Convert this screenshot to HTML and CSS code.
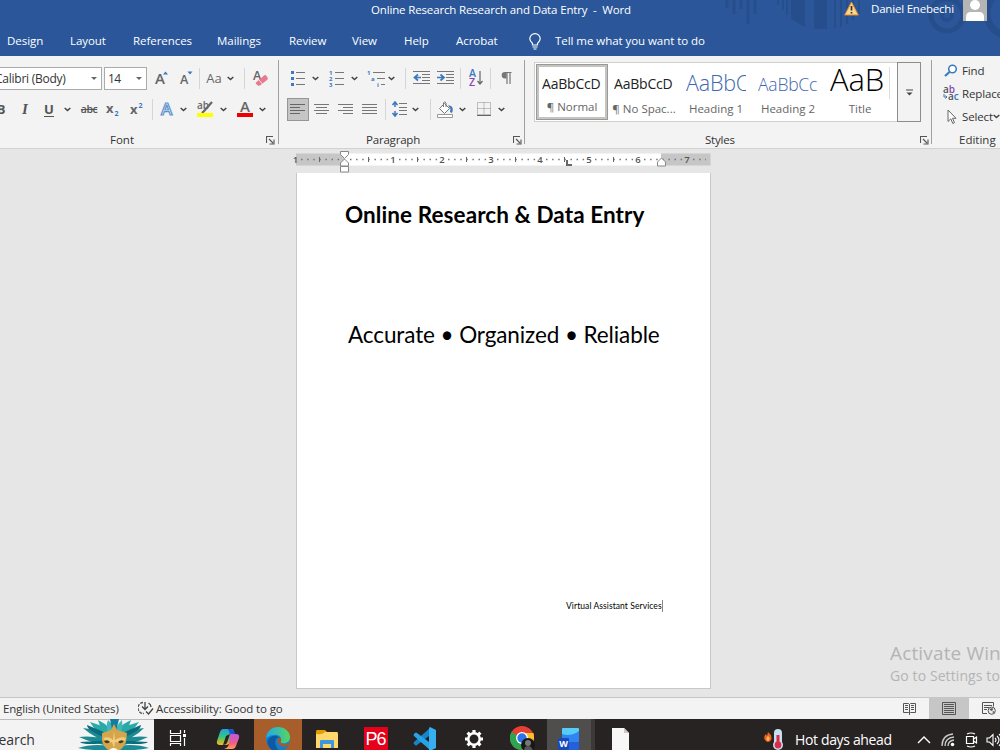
FILE: index.html
```html
<!DOCTYPE html>
<html lang="en">
<head>
    <meta charset="UTF-8">
    <meta name="viewport" content="width=device-width, initial-scale=1.0">
    <title>Online Research Research and Data Entry - Word</title>
    <link rel="stylesheet" href="styles.css">
</head>
<body>
    <!-- Shared shapes -->
    <svg class="defs" width="0" height="0">
        <symbol id="chev" viewBox="0 0 7 5"><path d="M.7 1l2.8 2.6L6.300 1" fill="none" stroke="#444" stroke-width="1.5"/></symbol>
        <symbol id="launch" viewBox="0 0 9 9"><path d="M.5 7V.5H7M3 3l4 4M8 3.500V8H3.500" fill="none" stroke="#555" stroke-width="1.100"/></symbol>
    </svg>

    <header class="titlebar">
        <svg class="pattern" width="300" height="56" viewBox="700 0 300 56">
            <g stroke="#264e8c" fill="none">
                <path d="M727 0v8M734 0v14M741 0v9M748 0v24M755 0v14" stroke-width="3"/>
                <path d="M778 0v5M783 0v10M787 0v15" stroke-width="2"/>
                <path d="M835 0v28M841 0v27M847 0v24M853 0v20M859 0v14" stroke-width="2"/>
                <circle cx="947" cy="15" r="16" stroke-width="5"/>
                <circle cx="947" cy="15" r="5" stroke-width="4"/>
                <circle cx="1010" cy="13" r="23" stroke-width="7"/>
            </g>
            <path d="M791 0h14v27l-14-8zM814 0h13v29h-13z" fill="#264e8c"/>
        </svg>
        <div class="title-row">
            <span class="doc-name">Online Research Research and Data Entry&nbsp; -&nbsp; Word</span>
            <svg class="warn" width="15" height="15" viewBox="0 0 15 15"><path d="M7.500 1L14.300 14H.7z" fill="#fcd68a" stroke="#e08a2c"/><path d="M7.500 5v4.500M7.500 11v1.600" stroke="#333" stroke-width="1.700"/></svg>
            <span class="user">Daniel Enebechi</span>
            <svg class="avatar" width="24" height="21" viewBox="0 0 24 21"><path d="M0 0h24v21H0z" fill="#b5b5b5"/><circle cx="12" cy="5" r="5" fill="#fff"/><path d="M3 21v-4q0-5 5-5h8q5 0 5 5v4z" fill="#fff"/></svg>
        </div>
        <nav class="tabs">
            <a>Design</a><a>Layout</a><a>References</a><a>Mailings</a><a>Review</a><a>View</a><a>Help</a><a>Acrobat</a>
            <svg width="12" height="17" viewBox="0 0 12 17"><path d="M3.500 12V10.500C2 9 .8 7.800.8 5.800a5.200 5.200 0 0 1 10.400 0c0 2-1.200 3.200-2.700 4.700V12zM3.500 14h5M4.500 16h3" fill="none" stroke="#fff" stroke-width="1.200"/></svg>
            <a class="tell">Tell me what you want to do</a>
        </nav>
    </header>

    <section class="ribbon">
        <div class="group font-group">
            <div class="row font-row-1">
                <div class="combo face"><span>Calibri (Body)</span><i class="arrow"></i></div>
                <div class="combo size"><span>14</span><i class="arrow"></i></div>
                <svg width="14" height="16" viewBox="0 0 14 16"><text x="1" y="14" class="g15">A</text><path d="M9 4.500l2.500-3 2.500 3z" fill="#3b78bd"/></svg>
                <svg width="14" height="16" viewBox="0 0 14 16"><text x="2" y="14" class="g12">A</text><path d="M9.500 1.500l2.500 3 2.500-3z" fill="#3b78bd"/></svg>
                <i class="sep"></i>
                <span class="case">Aa</span>
                <svg class="chev" width="7" height="5"><use href="#chev"/></svg>
                <i class="sep"></i>
                <svg width="16" height="17" viewBox="0 0 16 17"><text x="0" y="10" class="g12">A</text><path d="M3.500 12L11 5.500q1.500-1 2.500.5l1 1.500q1 1.500-.5 2.500l-7 5.500-2 .3-2.500-2.500z" fill="#e8798e"/><path d="M6 10l3.500 4" stroke="#f8dfe4"/></svg>
            </div>
            <div class="row font-row-2">
                <b class="letter">B</b>
                <i class="letter italic">I</i>
                <b class="letter under">U</b>
                <svg class="chev" width="7" height="5"><use href="#chev"/></svg>
                <span class="strike">abc</span>
                <svg width="14" height="16" viewBox="0 0 14 16"><text x="0" y="11.500" class="x">x</text><text x="8.500" y="15" class="n">2</text></svg>
                <svg width="14" height="16" viewBox="0 0 14 16"><text x="0" y="12.500" class="x">x</text><text x="8.500" y="7" class="n">2</text></svg>
                <i class="sep"></i>
                <svg width="15" height="16" viewBox="0 0 15 16"><text x="2" y="14" class="effect">A</text></svg>
                <svg class="chev" width="7" height="5"><use href="#chev"/></svg>
                <svg width="18" height="18" viewBox="0 0 18 18"><text x="1" y="9" class="hl">ab</text><path d="M16 2L9 10l-3 3" fill="none" stroke="#666" stroke-width="2.200"/><path d="M1 13h16v4H1z" fill="#ff0"/></svg>
                <svg class="chev" width="7" height="5"><use href="#chev"/></svg>
                <svg width="16" height="18" viewBox="0 0 16 18"><text x="3" y="12" class="g15">A</text><path d="M0 13h16v4H0z" fill="#e00"/></svg>
                <svg class="chev" width="7" height="5"><use href="#chev"/></svg>
            </div>
            <div class="caption"><span>Font</span><svg width="9" height="9"><use href="#launch"/></svg></div>
        </div>

        <div class="group para-group">
            <div class="row para-row-1">
                <svg width="15" height="16" viewBox="0 0 15 16"><path d="M1 1h3v3H1zM1 7h3v3H1zM1 13h3v3H1z" fill="#3b78bd"/><path d="M6 2.500h9M6 8.500h9M6 14.500h9" stroke="#777"/></svg>
                <svg class="chev" width="7" height="5"><use href="#chev"/></svg>
                <svg width="15" height="17" viewBox="0 0 15 17"><g class="num"><text x="0" y="5">1</text><text x="0" y="11">2</text><text x="0" y="17">3</text></g><path d="M6 2.500h9M6 8.500h9M6 14.500h9" stroke="#777"/></svg>
                <svg class="chev" width="7" height="5"><use href="#chev"/></svg>
                <svg class="multi" width="18" height="17" viewBox="0 0 18 17"><g class="num"><text x="-1" y="5">1</text><text x="3" y="11">a</text><text x="9" y="17">i</text></g><path d="M5 2.500h12M9 8.500h8M13 14.500h4" stroke="#777"/></svg>
                <svg class="chev" width="7" height="5"><use href="#chev"/></svg>
                <i class="sep"></i>
                <svg width="17" height="14" viewBox="0 0 17 14"><path d="M0 .5h17M9 3.500h8M9 6.500h8M9 9.500h8M0 12.500h17" stroke="#777"/><path d="M8 6.500H2M5 3.500l-3.500 3 3.500 3" fill="none" stroke="#3b78bd" stroke-width="1.700"/></svg>
                <svg width="17" height="14" viewBox="0 0 17 14"><path d="M0 .5h17M9 3.500h8M9 6.500h8M9 9.500h8M0 12.500h17" stroke="#777"/><path d="M0 6.500h6M3.500 3.500l3.500 3-3.500 3" fill="none" stroke="#3b78bd" stroke-width="1.700"/></svg>
                <i class="sep"></i>
                <svg width="14" height="18" viewBox="0 0 14 18"><text x="0" y="8" class="az">A</text><text x="0" y="17" class="az z">Z</text><path d="M11 2v13M8.500 12l2.500 3 2.500-3" fill="none" stroke="#666" stroke-width="1.200"/></svg>
                <i class="sep"></i>
                <svg width="11" height="14" viewBox="0 0 11 14"><path d="M5.500 1H4a3.300 3.300 0 0 0 0 6.600h1.500z" fill="#777"/><path d="M4 1.500h6.500M6 1v12M9 1v12" fill="none" stroke="#777" stroke-width="1.200"/></svg>
            </div>
            <div class="row para-row-2">
                <div class="pressed"><svg width="15" height="11" viewBox="0 0 15 11"><path d="M0 .5h15M0 3.500h10M0 6.500h15M0 9.500h10" stroke="#666"/></svg></div>
                <svg width="15" height="11" viewBox="0 0 15 11"><path d="M0 .5h15M2 3.500h11M0 6.500h15M2 9.500h11" stroke="#777"/></svg>
                <svg width="15" height="11" viewBox="0 0 15 11"><path d="M0 .5h15M5 3.500h10M0 6.500h15M5 9.500h10" stroke="#777"/></svg>
                <svg width="15" height="11" viewBox="0 0 15 11"><path d="M0 .5h15M0 3.500h15M0 6.500h15M0 9.500h15" stroke="#777"/></svg>
                <i class="sep"></i>
                <svg width="15" height="16" viewBox="0 0 15 16"><path d="M3 1v5M3 10v5M.5 4L3 1l2.500 3M.5 12L3 15l2.500-3" fill="none" stroke="#3b78bd" stroke-width="1.500"/><path d="M7 2.500h8M7 6.500h8M7 9.500h8M7 13.500h8" stroke="#777"/></svg>
                <svg class="chev" width="7" height="5"><use href="#chev"/></svg>
                <i class="sep"></i>
                <svg width="17" height="17" viewBox="0 0 17 17"><path d="M2.500 7.500l5-5 5 5-5 5zM6.500 6V2q1-2.500 2.500 0v4" fill="#fff" stroke="#777"/><path d="M11 4l3 1q3 2 1 7l-2-1 .5-3z" fill="#3b78bd"/><path d="M.5 13.500h15v3H.5z" fill="#fff" stroke="#999"/></svg>
                <svg class="chev" width="7" height="5"><use href="#chev"/></svg>
                <svg width="15" height="15" viewBox="0 0 15 15"><path d="M.5.500h13v12H.5zM7 .5v12M.5 6.500h13" fill="none" stroke="#888" stroke-dasharray="1 1"/><path d="M0 13.500h14" stroke="#666"/></svg>
                <svg class="chev" width="7" height="5"><use href="#chev"/></svg>
            </div>
            <div class="caption"><span>Paragraph</span><svg width="9" height="9"><use href="#launch"/></svg></div>
        </div>

        <div class="group style-group">
            <div class="gallery">
                <div class="style selected"><span class="sample">AaBbCcD</span><span class="name">¶ Normal</span></div>
                <div class="style"><span class="sample">AaBbCcD</span><span class="name">¶ No Spac...</span></div>
                <div class="style h1"><span class="sample">AaBbC</span><span class="name">Heading 1</span></div>
                <div class="style h2"><span class="sample">AaBbCc</span><span class="name">Heading 2</span></div>
                <div class="style big"><span class="sample">AaB</span><span class="name">Title</span></div>
                <div class="more"><svg width="7" height="7" viewBox="0 0 7 7"><path d="M0 1h7" stroke="#444"/><path d="M.5 3.500h6l-3 3z" fill="#444"/></svg></div>
            </div>
            <div class="caption"><span>Styles</span><svg width="9" height="9"><use href="#launch"/></svg></div>
        </div>

        <div class="group edit-group">
            <div class="edit"><svg width="15" height="14" viewBox="0 0 15 14"><circle cx="9" cy="5" r="3.800" fill="#fff" stroke="#3b78bd" stroke-width="1.500"/><path d="M6 8l-4.500 4" stroke="#3b78bd" stroke-width="2.200"/></svg><span>Find</span></div>
            <div class="edit"><svg width="16" height="17" viewBox="0 0 16 17"><g class="swap"><text x="0" y="7.500">a<tspan fill="#8a43b5">b</tspan></text><text x="5" y="15">a<tspan fill="#3b78bd">c</tspan></text></g><path d="M1 9v3h3M2.500 10.500L4 12l-1.500 1.500" fill="none" stroke="#3b78bd"/></svg><span>Replace</span></div>
            <div class="edit"><svg width="15" height="16" viewBox="0 0 15 16"><path d="M4.500 1v11.500l2.800-2.700 2 4.700 1.700-.8-2-4.400h3.500z" fill="#fff" stroke="#666"/></svg><span>Select</span><svg class="chev" width="7" height="5"><use href="#chev"/></svg></div>
            <div class="caption"><span>Editing</span></div>
        </div>
    </section>

    <main class="workspace">
        <svg class="ruler" width="420" height="24" viewBox="292 149 420 24">
            <path d="M296 153.500h48v12h-48zM661 153.500h49.500v12H661z" fill="#c6c6c6"/>
            <path d="M344 153.500h317v12H344z" fill="#fff"/>
            <path d="M301 159.500H342M350 159.500H391" class="dots"/>
            <path d="M399 159.500H440M448 159.500H489M497 159.500H538M546 159.500H587M595 159.500H636M644 159.500H685M693 159.500H706" class="dots"/>
            <path d="M319.500 157v5M368.500 157v5M417.500 157v5M466.500 157v5M515.500 157v5M564.500 157v5M613.500 157v5" stroke="#666"/>
            <g class="marks"><text x="295.500" y="163">1</text><text x="393" y="163">1</text><text x="442" y="163">2</text><text x="491" y="163">3</text><text x="540" y="163">4</text><text x="589" y="163">5</text><text x="638" y="163">6</text><text x="687" y="163">7</text></g>
            <path d="M340.500 151.500h8v3l-4 4-4-4zM344.500 159l4 4v3h-8v-3zM340.500 166.500h8v5.500h-8zM661.500 158l4 4v4h-8v-4z" fill="#fff" stroke="#888"/>
            <path d="M567 160v5h5" fill="none" stroke="#666" stroke-width="2"/>
        </svg>
        <article class="page">
            <h1>Online Research &amp; Data Entry</h1>
            <p class="tagline">Accurate • Organized • Reliable</p>
            <p class="services"><span>Virtual Assistant Services</span></p>
        </article>
        <div class="watermark">
            <p class="activate">Activate Windows</p>
            <p class="settings">Go to Settings to activate Windows.</p>
        </div>
    </main>

    <footer class="statusbar">
        <span class="lang">English (United States)</span>
        <svg class="access" width="16" height="15" viewBox="0 0 16 15"><path d="M5 1.500A5.500 5.500 0 0 0 6 12.500" fill="none" stroke="#555" stroke-width="1.300" stroke-dasharray="3 1"/><path d="M7 1v7M4 5.500l3 3 3-3M10.500 2q2.500 1.500 2.500 4M8 10.500l2.500 2.500L15 7.500" fill="none" stroke="#444" stroke-width="1.300"/></svg>
        <span class="good">Accessibility: Good to go</span>
        <div class="views">
            <div><svg width="13" height="13" viewBox="0 0 13 13"><path d="M.5 1.500h5l1 1 1-1h5v9h-5l-1 1-1-1h-5zM6.500 2v11M2 3.500h3M2 5.500h3M2 7.500h3M8 3.500h3M8 5.500h3M8 7.500h3" fill="none" stroke="#555"/></svg></div>
            <div class="active"><svg width="14" height="13" viewBox="0 0 14 13"><path d="M.5.500h13v12H.5zM2 2.500h10M2 4.500h10M2 6.500h10M2 8.500h10M2 10.500h10" fill="none" stroke="#555"/></svg></div>
            <div><svg width="14" height="13" viewBox="0 0 14 13"><path d="M5 11.500H.5V.5h11v4M2 3.500h8M2 5.500h5M2 7.500h3" fill="none" stroke="#555"/><circle cx="9.700" cy="8.700" r="3.600" fill="#eee" stroke="#555"/><path d="M7.500 7l3-1 .5 2-2 1zM10 10l2-1v2z" fill="#555"/></svg></div>
        </div>
    </footer>

    <div class="taskbar">
        <div class="search"><span>Search</span>
            <svg width="72" height="31" viewBox="78 719 72 31">
                <g fill="#1c8c94">
                    <path d="M111 750Q92 751 78 748q14-5 33-2zM112 746Q94 744 79 737q19-2 36 6zM113 744Q94 738 83 728q17 1 32 13z"/>
                    <path d="M117 750q19 1 32-2-13-5-32-2zM116 746q18-2 32-9-19-2-35 6zM115 744q20-6 29-16-18 1-32 13z"/>
                </g>
                <g fill="#2aa9a9"><path d="M113 742Q95 732 90 722q17 4 26 18zM114 741Q100 730 98 720q13 6 19 20zM115 742Q133 732 139 722q-18 4-26 18zM114 741Q129 730 131 720q-14 6-18 20z"/></g>
                <g fill="#0d6c7b"><path d="M114 742Q84 746 80 742q18-1 34-2zM115 741Q87 732 87 725q14 5 28 13zM113 742q30 4 35 0-18-1-35-2zM113 741q28-9 28-16-14 5-27 13z"/></g>
                <path d="M112 740q-8-12-4-20 7 5 6 20zM114 740q1-15 8-20 2 10-6 20z" fill="#42b7b9"/><path d="M114 740l-4-21h9z" fill="#147c9d"/>
                <path d="M102 733q6-2 9-3l3-6 3 6q4 1 10 3l-1 9q-3 7-8 9h-8q-6-3-8-10z" fill="#d5a54b"/>
                <path d="M103 738q7-2 10 2l1-9 1 9q5-4 11-2-1 4-5 5l-6-1-1 6-2-6-5 1z" fill="#f1ce7d"/>
                <path d="M104 741q4-2 6 1-4 3-6-1zM118 742q3-3 6-1-3 4-6 1z" fill="#493822"/><path d="M109 750q5-4 9 0z" fill="#fff"/>
            </svg>
        </div>
        <div class="apps">
            <div><svg width="18" height="17" viewBox="0 0 18 17"><path d="M1.500 0v3.500h10V0M1.500 16v-2.500h10V16M1.500 5.500h10v6h-10zM15.500 0v3M15.500 8v8" fill="none" stroke="#fff" stroke-width="1.200"/><path d="M14 4h3v3h-3z" fill="#fff"/></svg></div>
            <div><svg width="24" height="22" viewBox="0 0 24 22">
                <defs><linearGradient id="cpA" x2="0" y2="1"><stop stop-color="#23a0e8"/><stop offset=".5" stop-color="#37c779"/><stop offset="1" stop-color="#ffb515"/></linearGradient><linearGradient id="cpB" x2="0" y2="1"><stop stop-color="#b85be6"/><stop offset=".6" stop-color="#f35a86"/><stop offset="1" stop-color="#ff9d55"/></linearGradient></defs>
                <path d="M7 1h9q2 0 1 3l-3 10q-1 3-4 3H4q-4 0-3-4L4 4q1-3 3-3z" fill="url(#cpA)"/><path d="M14 6h6q4 0 3 4l-3 8q-1 3-4 3H8q4-1 5-5z" fill="url(#cpB)"/><path d="M12 1h4q2 0 3 5h-5z" fill="#1c56c6"/><path d="M10 8l4-2-3 9q-1 2-4 2z" fill="#272323"/></svg></div>
            <div class="edge"><svg width="26" height="26" viewBox="0 0 26 26">
                <defs><linearGradient id="eg"><stop stop-color="#24a8e8"/><stop offset="1" stop-color="#54d65f"/></linearGradient></defs>
                <circle cx="13" cy="13" r="12" fill="#1584d4"/><path d="M1 12C2 4 8 1 13 1c7 0 12 5 12 10 0 5-4 7-8 6-3-.5-2-2-1-3 1-6-9-7-15-2z" fill="url(#eg)"/><path d="M11 13q-3 8 6 10-8 5-13-2Q-1 13 8 10q5-1 7 3-2-2-4 0z" fill="#0c59a4"/><path d="M12 14q-1 6 6 6l6-1q-3 6-9 6-6-3-3-11z" fill="#1a7ac7"/><path d="M13 12q4-1 3 3-1 2 2 3 4 1 6-2l-1 4q-5 2-8-1-4-3-2-7z" fill="#a45b29"/></svg></div>
            <div><svg width="22" height="20" viewBox="0 0 22 20"><path d="M0 3q0-2 1-2h8l2 2v5H0z" fill="#dea000"/><path d="M0 5q6 1 9-2h12q1 0 1 2v14H0z" fill="#ffd76a"/><path d="M4 19v-7q0-1 1-1h12q1 0 1 1v7h-3v-4H7v4z" fill="#3b98df"/></svg></div>
            <div><span class="p6">P6</span></div>
            <div><svg width="25" height="24" viewBox="0 0 25 24"><path d="M18 1L2 15q-1 1 0 2l1 1q1 1 2 0L21 6z" fill="#1685c8"/><path d="M18 23L2 9q-1-1 0-2l1-1q1-1 2 0l16 12z" fill="#27a2e6"/><path d="M18 0l6 3v18l-6 3-1-1V1z" fill="#37aef0"/></svg></div>
            <div><svg width="20" height="20" viewBox="0 0 20 20"><circle cx="10" cy="10" r="5.700" fill="none" stroke="#fff" stroke-width="2.500"/><path d="M10 1v3M10 16v3M1 10h3M16 10h3M3.600 3.600l2.200 2.200M14.200 14.200l2.200 2.200M16.400 3.600l-2.200 2.200M5.800 14.200l-2.200 2.200" stroke="#fff" stroke-width="3.200"/></svg></div>
            <div><svg width="25" height="25" viewBox="0 0 25 25"><circle cx="12" cy="12" r="12" fill="#e64034"/><path d="M12 12L1.500 6A12 12 0 0 0 12 24l5-9z" fill="#2da44f"/><path d="M12 7h11.500Q26 18 17 23l-5 1 5-9z" fill="#fbc226"/><circle cx="12" cy="12" r="6" fill="#fff"/><circle cx="12" cy="12" r="4.700" fill="#2c74e8"/><circle cx="18" cy="19" r="7" fill="#171717"/><circle cx="18" cy="17" r="3" fill="#777"/><path d="M14 25q0-5 4-5t5 5z" fill="#555"/></svg></div>
            <div class="current"><svg width="22" height="24" viewBox="0 0 22 24"><path d="M5 1h15q1 0 1 1v7H4V2q0-1 1-1z" fill="#54cdf8"/><path d="M4 7q9 3 17-3v12H4z" fill="#3184f3"/><path d="M4 15h17v8H4z" fill="#2461d8"/><rect y="11" width="11" height="12" rx="1" fill="#164bb8"/><text x="1.200" y="20" class="w">W</text></svg></div>
            <div><svg width="17" height="23" viewBox="0 0 17 23"><path d="M0 1h12l5 5v17H0z" fill="#f7f7f7"/><path d="M12 1v5h5z" fill="#c9c9c9"/></svg></div>
        </div>
        <div class="tray">
            <svg class="weather" width="20" height="22" viewBox="0 0 20 22"><path d="M4 4q5 4 3 8-3 4-6 0-2-3 1-6l1 2z" fill="#f26322"/><path d="M4 8q3 3 0 5-3-2 0-5z" fill="#ffc04e"/><rect x="10" y="1" width="8" height="17" rx="4" fill="#c6dff1"/><circle cx="14" cy="17" r="5" fill="#c6dff1"/><circle cx="14" cy="17" r="3.400" fill="#dc2b46"/><path d="M14 7v10" stroke="#dc2b46" stroke-width="3"/></svg>
            <span>Hot days ahead</span>
            <svg class="up" width="14" height="8" viewBox="0 0 14 8"><path d="M1 7l6-6 6 6" fill="none" stroke="#fff" stroke-width="1.400"/></svg>
            <svg class="wifi" width="14" height="14" viewBox="0 0 14 14"><path d="M1 13Q1 2 12 1M4 13Q4 5 13 4M7 13q0-5 6-6" fill="none" stroke="#ccc" stroke-width="1.300"/><circle cx="11.500" cy="11.500" r="1.800" fill="#fff"/></svg>
            <svg class="meet" width="13" height="16" viewBox="0 0 13 16"><path d="M1.500 4.500h7v7h-7zM8.500 7l3-2v6l-3-2M2 2q4-2 8 0M2 14q4 2 8 0" fill="none" stroke="#fff" stroke-width="1.200"/></svg>
            <svg class="sound" width="16" height="14" viewBox="0 0 16 14"><path d="M1 5h2.500L7 1.500v11L3.500 9H1zM9 5q2 2 0 4M11 3q4 4 0 8M13 1q5 6 0 12" fill="none" stroke="#fff" stroke-width="1.100"/></svg>
        </div>
    </div>
</body>
</html>
```
FILE: styles.css
```css
* {
    box-sizing: border-box;
}

body {
    margin: 0;
    width: 1000px;
    height: 750px;
    overflow: hidden;
    display: flex;
    flex-direction: column;
    background: #e6e6e6;
    color: #333;
    font-family: "Open Sans", "Noto Sans", sans-serif;
    font-size: 11.5px;
    white-space: nowrap;
}

svg {
    display: block;
    flex: none;
}

.defs {
    position: absolute;
}

p, h1 {
    margin: 0;
}

/* Title bar */
.titlebar {
    position: relative;
    height: 56px;
    flex: none;
    background: #2b579a;
    color: #fff;
}

.pattern {
    position: absolute;
    top: 0;
    right: 0;
}

.title-row {
    position: relative;
    display: flex;
    height: 21px;
    padding-left: 371px;
    line-height: 19px;
}

.doc-name {
    width: 473px;
    letter-spacing: -0.15px;
}

.warn {
    margin-top: 1px;
}

.user {
    width: 92px;
    margin-left: 12px;
    line-height: 18px;
    letter-spacing: -0.2px;
}

.tabs {
    position: relative;
    display: grid;
    grid-template-columns: 63px 63px 84px 72px 63px 52px 52px 73px 26px auto;
    align-items: center;
    height: 32px;
    margin-top: 4px;
    padding-left: 7px;
    line-height: 32px;
    letter-spacing: -0.05px;
}

/* Ribbon */
.ribbon {
    display: flex;
    flex: none;
    height: 93px;
    background: #f3f3f3;
    border-bottom: 1px solid #d2d2d2;
}

.ribbon svg {
    overflow: visible;
}

.group {
    position: relative;
    display: flex;
    flex-direction: column;
    flex: none;
    padding-top: 10px;
}

.group:not(:last-child)::after {
    content: "";
    position: absolute;
    right: 0;
    top: 4px;
    width: 1px;
    height: 84px;
    background: #a0a0a0;
}

.font-group { width: 279px; }
.para-group { width: 246px; padding-left: 6px; }
.style-group { width: 407px; padding: 6px 0 0 9px; }
.edit-group { width: 68px; padding: 3px 0 0 11px; overflow: hidden; }

.row {
    display: grid;
    align-items: center;
    justify-items: center;
    height: 24px;
    margin-bottom: 7px;
}

.font-row-1 { grid-template-columns: 104px 43px 28px 20px 9px 20px 16px 9px 23px; }
.font-row-2 { grid-template-columns: 24px 24px 24px 16px 24px 24px 24px 7px 21px 16px 24px 16px 23px 14px; margin-left: -11px; }
.para-row-1 { grid-template-columns: 24px 16px 23px 17px 20px 16px 8px 24px 24px 6px 26px 3px 28px; }
.para-row-2 { grid-template-columns: 24px 24px 24px 24px 9px 19px 16px 10px 21px 17px 22px 14px; }

.chev {
    justify-self: start;
    margin-left: 3px;
}

.multi {
    margin-left: 4px;
}

.sep {
    width: 1px;
    height: 21px;
    background: #d5d5d5;
}

.combo {
    display: flex;
    align-items: center;
    justify-content: space-between;
    height: 23px;
    padding-right: 4px;
    background: #fff;
    border: 1px solid #ababab;
    font-size: 12px;
}

.face {
    justify-self: start;
    width: 102px;
    border-left: 0;
    overflow: hidden;
}

.face span {
    margin-left: -5px;
    letter-spacing: -0.25px;
}

.size {
    width: 43px;
    padding-left: 3px;
    letter-spacing: -0.6px;
}

.arrow {
    border: 3px solid transparent;
    border-top-color: #666;
    border-bottom: 0;
}

.g15, .g12, .x, .effect, .hl {
    font-weight: 600;
    fill: #666;
}

.g15 { font-size: 15px; }
.g12 { font-size: 12.5px; }
.x { font-size: 13px; font-weight: 700; }
.n { font-size: 7px; font-weight: 700; fill: #3b78bd; }
.hl { font-size: 10px; }
.num { font-size: 6px; font-weight: 700; fill: #3b78bd; }
.az { font-size: 10.5px; font-weight: 600; fill: #3b78bd; }
.z { fill: #8a43b5; }
.swap { font-size: 10px; font-weight: 600; fill: #555; }

.effect {
    font-size: 17px;
    fill: #fff;
    stroke: #5b91cc;
    stroke-width: 1.2px;
}

.case {
    font-size: 13px;
    color: #666;
}

.letter {
    font-size: 13px;
    color: #555;
    line-height: 15px;
}

.italic {
    font-family: "Liberation Serif", serif;
    font-size: 15px;
    font-weight: bold;
}

.under {
    border-bottom: 1px solid #555;
    line-height: 14px;
}

.strike {
    font-size: 10.5px;
    font-weight: 600;
    color: #555;
    letter-spacing: -0.5px;
    text-decoration: line-through;
}

.pressed {
    display: grid;
    place-items: center;
    width: 22px;
    height: 23px;
    margin-left: 1px;
    background: #c5c5c5;
    border: 1px solid #969696;
}

.caption {
    display: flex;
    align-items: center;
    justify-content: space-between;
    height: 16px;
    margin-top: 4px;
    line-height: 16px;
}

.font-group .caption { padding: 0 4px 0 110px; }
.para-group .caption { padding: 0 3px 0 81px; letter-spacing: -0.2px; }
.style-group .caption { padding: 0 3px 0 171px; margin-top: 10px; letter-spacing: -0.2px; }
.edit-group .caption { padding-left: 16px; margin-top: 4px; }

.gallery {
    display: flex;
    width: 387px;
    height: 60px;
    padding-left: 1px;
    background: #fff;
    border: 1px solid #d0d0d0;
    border-right: 0;
}

.style {
    display: flex;
    flex-direction: column;
    align-items: center;
    width: 72px;
    height: 56px;
    margin-top: 1px;
    padding-top: 3px;
}

.selected {
    padding-top: 0;
    border: 3px solid #c4c4c0;
    outline: 1px solid #999;
    outline-offset: -1px;
}

.sample {
    width: 60px;
    height: 32px;
    overflow: hidden;
    color: #222;
    font-size: 14px;
    line-height: 34px;
    letter-spacing: -0.2px;
}

.name {
    color: #666;
    line-height: 20px;
}

.h1 .sample, .h2 .sample { color: #4068ae; }
.h1 .sample { font-size: 21.5px; line-height: 32px; font-weight: 300; }
.h2 .sample { font-size: 17.5px; line-height: 35px; font-weight: 300; }

.big .sample {
    width: 60px;
    color: #000;
    font-size: 31px;
    font-weight: 300;
    line-height: 24px;
    border-right: 1px solid #ddd;
}

.more {
    display: grid;
    place-items: center;
    width: 24px;
    height: 60px;
    margin: -1px 0 0 auto;
    background: #f3f3f3;
    border: 1px solid #8c8c8c;
}

.edit {
    display: flex;
    align-items: center;
    height: 23px;
    letter-spacing: -0.15px;
}

.edit span {
    width: 35px;
    margin-left: 3px;
}

.edit svg:first-child {
    width: 16px;
}

.edit .chev {
    margin-left: 0;
}

/* Document area */
.workspace {
    position: relative;
    flex: 1;
    overflow: hidden;
}

.ruler {
    margin-left: 292px;
}

.dots {
    stroke: #777;
    stroke-width: 1.5;
    stroke-dasharray: 1.5 4.6;
    stroke-dashoffset: 0;
}

.marks {
    font-size: 9.5px;
    font-weight: 600;
    fill: #555;
    text-anchor: middle;
}

.page {
    width: 415px;
    height: 516px;
    margin-left: 296px;
    padding: 28px 47px 0 48px;
    background: #fff;
    border: 1px solid #c8c8c8;
    border-top: 0;
    color: #000;
    font-family: "Lato", "Open Sans", sans-serif;
}

.page h1 {
    font-size: 22.5px;
    line-height: 28px;
    font-weight: 700;
    letter-spacing: 0.08px;
}

.tagline {
    margin-top: 92px;
    padding-left: 3px;
    font-size: 22.5px;
    line-height: 28px;
    letter-spacing: -0.1px;
}

.services {
    margin-top: 249px;
    padding-left: 221px;
    font-size: 8.5px;
    line-height: 16px;
    letter-spacing: 0.08px;
}

.services span {
    display: inline-block;
    line-height: 12px;
    border-right: 1px solid #888;
}

.watermark {
    position: absolute;
    left: 890px;
    top: 492px;
    color: #b4b4b4;
}

.activate {
    font-size: 19px;
    line-height: 24px;
    letter-spacing: 0.15px;
}

.settings {
    font-size: 14px;
    line-height: 22px;
    letter-spacing: 0.1px;
}

/* Status bar */
.statusbar {
    display: flex;
    align-items: center;
    flex: none;
    height: 22px;
    padding-left: 3px;
    background: #f3f3f3;
    border-top: 1px solid #c6c6c6;
}

.lang {
    width: 135px;
    letter-spacing: -0.17px;
}

.good {
    margin-left: 2px;
    letter-spacing: -0.12px;
}

.views {
    display: flex;
    align-self: stretch;
    margin-left: auto;
    margin-right: -9px;
}

.views div {
    display: grid;
    place-items: center;
    width: 40px;
}

.views .active {
    background: #c6c6c6;
}

/* Taskbar */
.taskbar {
    display: flex;
    flex: none;
    height: 31px;
    overflow: hidden;
    background: #272323;
    color: #fff;
}

.search {
    display: flex;
    flex: none;
    width: 154px;
    background: #f3f3f3;
    border-top: 1px solid #bbb;
    color: #333;
    font-size: 14px;
    line-height: 40px;
    letter-spacing: -0.1px;
}

.search span {
    width: 87px;
    margin-left: -9px;
}

.search svg {
    margin-top: -1px;
}

.apps {
    display: grid;
    flex: none;
    grid-template-columns: 48px 52px 48px 49px 49px 49px 49px 49px 48px 50px;
    height: 39px;
}

.apps div {
    display: grid;
    place-items: center;
}

.edge {
    background: #a75e2b;
}

.current {
    background: #504d4d;
    border-right: 4px solid #3c3939;
}

.p6 {
    width: 24px;
    height: 24px;
    background: #e5001b;
    font-family: "Liberation Sans", sans-serif;
    font-size: 18px;
    line-height: 25px;
    text-align: center;
    letter-spacing: -1px;
}

.w {
    font-size: 9px;
    font-weight: 700;
    fill: #fff;
}

.tray {
    display: flex;
    flex: none;
    align-items: center;
    height: 41px;
    margin-left: 119px;
    font-size: 14px;
    letter-spacing: -0.35px;
}

.tray span {
    width: 122px;
    margin-left: 11px;
}

.weather { margin-top: -2px; }
.wifi { margin-left: 10px; }
.meet { margin-left: 10px; }
.sound { margin-left: 8px; }
```
